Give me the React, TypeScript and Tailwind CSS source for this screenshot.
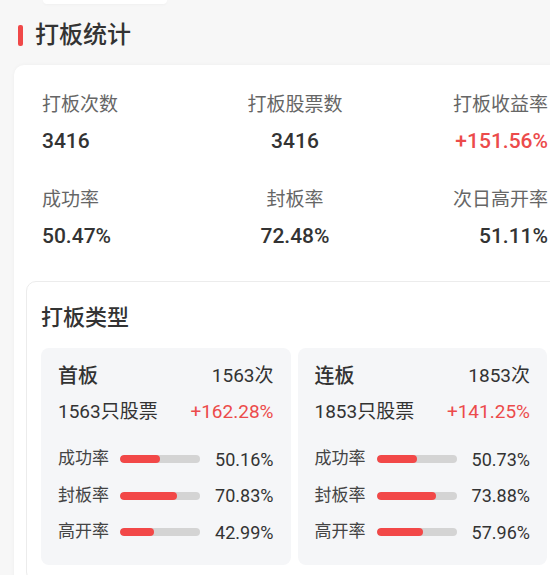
const stats = [
  { label: "打板次数", value: "3416" },
  { label: "打板股票数", value: "3416" },
  { label: "打板收益率", value: "+151.56%", red: true },
  { label: "成功率", value: "50.47%" },
  { label: "封板率", value: "72.48%" },
  { label: "次日高开率", value: "51.11%" },
];

const types = [
  {
    name: "首板",
    count: "1563次",
    stocks: "1563只股票",
    gain: "+162.28%",
    rates: [
      { label: "成功率", pct: 50.16 },
      { label: "封板率", pct: 70.83 },
      { label: "高开率", pct: 42.99 },
    ],
  },
  {
    name: "连板",
    count: "1853次",
    stocks: "1853只股票",
    gain: "+141.25%",
    rates: [
      { label: "成功率", pct: 50.73 },
      { label: "封板率", pct: 73.88 },
      { label: "高开率", pct: 57.96 },
    ],
  },
];

const alignFor = (i: number) =>
  i % 3 === 0 ? "text-left" : i % 3 === 1 ? "text-center" : "text-right";

const TypeCard = ({ t }: { t: (typeof types)[number] }) => {
  return (
    <div className="rounded-[8px] bg-[#f5f6f8] pl-[17px] pr-[17px] pt-[14px] pb-[20px]">
      <div className="flex justify-between items-center leading-[28px]">
        <span className="text-[20px] font-medium text-[#333]">{t.name}</span>
        <span className="text-[19px] text-[#333]">{t.count}</span>
      </div>
      <div className="mt-[9px] flex justify-between items-center leading-[26px]">
        <span className="text-[19px] text-[#333]">{t.stocks}</span>
        <span className="text-[19px] text-[#ec4b4b]">{t.gain}</span>
      </div>
      <div className="mt-[21px] flex flex-col gap-[10.5px]">
        {t.rates.map((r) => (
          <div key={r.label} className="flex items-center h-[26px]">
            <span className="text-[17px] text-[#444]">{r.label}</span>
            <div className="ml-[11px] w-[80px] h-[8px] rounded-full bg-[#d4d4d4] overflow-hidden">
              <div
                className="h-full rounded-full bg-[#f24848]"
                style={{ width: `${r.pct}%` }}
              />
            </div>
            <span className="flex-1 text-right text-[18px] text-[#333]">
              {r.pct.toFixed(2)}%
            </span>
          </div>
        ))}
      </div>
    </div>
  );
};

export default function App() {
  return (
    <div
      className="w-[550px] h-[575px] overflow-hidden bg-[#f7f7f7]"
      style={{ fontFamily: "Roboto, 'Noto Sans CJK SC', sans-serif" }}
    >
      <div className="w-[576px]">
        <div className="ml-[43px] w-[124px] h-[4px] bg-white rounded-b-[4px] shadow-[0_1px_3px_rgba(0,0,0,0.03)]" />
        <div className="mt-[20px] flex items-center h-[22px]">
          <div className="ml-[18px] w-[5px] h-[21px] rounded-[2px] bg-[#f04848]" />
          <span className="ml-[12px] text-[24px] leading-[22px] font-medium text-[#333]">
            打板统计
          </span>
        </div>

        <div className="mt-[19px] ml-[14px] w-[562px] bg-white rounded-[10px] px-3 pt-[27px] pb-6 shadow-[0_0_4px_rgba(0,0,0,0.04)]">
          <div className="grid grid-cols-3 gap-y-[32px] px-4">
            {stats.map((s, i) => (
              <div key={s.label} className={alignFor(i)}>
                <div className="text-[19px] leading-[26px] text-[#666]">{s.label}</div>
                <div
                  className={`mt-[9px] text-[21px] leading-[28px] font-medium ${
                    s.red ? "text-[#ec4b4b]" : "text-[#333]"
                  }`}
                >
                  {s.value}
                </div>
              </div>
            ))}
          </div>

          <div className="mt-[31px] rounded-[10px] border border-[#ececec] pl-[14px] pr-[16px] pt-[22px] pb-4">
            <div className="text-[22px] leading-[28px] font-medium text-[#333]">打板类型</div>
            <div className="mt-[16px] grid grid-cols-2 gap-[7px]">
              {types.map((t) => (
                <TypeCard key={t.name} t={t} />
              ))}
            </div>
          </div>
        </div>
      </div>
    </div>
  );
}
